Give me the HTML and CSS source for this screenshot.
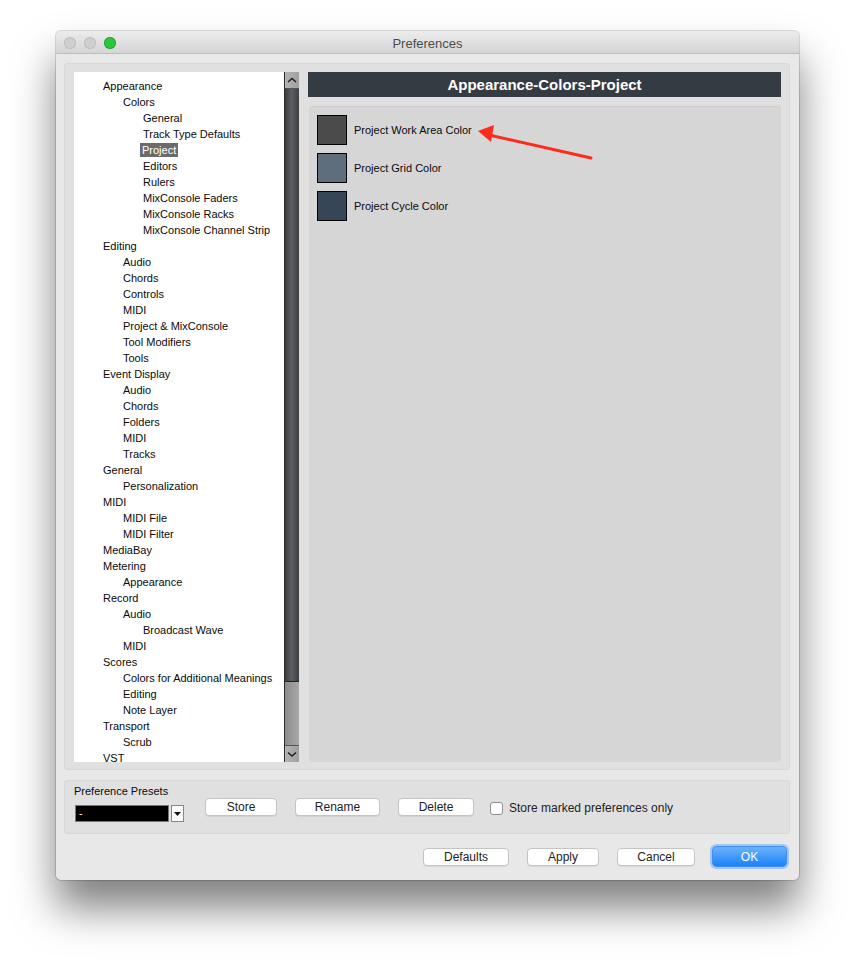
FILE: index.html
```html
<!DOCTYPE html>
<html lang="en">

<head>
    <meta charset="UTF-8">
    <meta name="viewport" content="width=device-width, initial-scale=1.0">
    <title>Preferences</title>
    <link rel="stylesheet" href="styles.css">
</head>

<body>
    <div class="window">
        <!-- Title bar -->
        <div class="titlebar">
            <div class="lights">
                <span class="light"></span>
                <span class="light"></span>
                <span class="light green"></span>
            </div>
            <div class="title">Preferences</div>
        </div>

        <!-- Main area: tree + page -->
        <div class="main">
            <div class="tree">
                <div class="tree-list">
                    <div class="item l1">Appearance</div>
                    <div class="item l2">Colors</div>
                    <div class="item l3">General</div>
                    <div class="item l3">Track Type Defaults</div>
                    <div class="item l3"><span class="selected">Project</span></div>
                    <div class="item l3">Editors</div>
                    <div class="item l3">Rulers</div>
                    <div class="item l3">MixConsole Faders</div>
                    <div class="item l3">MixConsole Racks</div>
                    <div class="item l3">MixConsole Channel Strip</div>
                    <div class="item l1">Editing</div>
                    <div class="item l2">Audio</div>
                    <div class="item l2">Chords</div>
                    <div class="item l2">Controls</div>
                    <div class="item l2">MIDI</div>
                    <div class="item l2">Project &amp; MixConsole</div>
                    <div class="item l2">Tool Modifiers</div>
                    <div class="item l2">Tools</div>
                    <div class="item l1">Event Display</div>
                    <div class="item l2">Audio</div>
                    <div class="item l2">Chords</div>
                    <div class="item l2">Folders</div>
                    <div class="item l2">MIDI</div>
                    <div class="item l2">Tracks</div>
                    <div class="item l1">General</div>
                    <div class="item l2">Personalization</div>
                    <div class="item l1">MIDI</div>
                    <div class="item l2">MIDI File</div>
                    <div class="item l2">MIDI Filter</div>
                    <div class="item l1">MediaBay</div>
                    <div class="item l1">Metering</div>
                    <div class="item l2">Appearance</div>
                    <div class="item l1">Record</div>
                    <div class="item l2">Audio</div>
                    <div class="item l3">Broadcast Wave</div>
                    <div class="item l2">MIDI</div>
                    <div class="item l1">Scores</div>
                    <div class="item l2">Colors for Additional Meanings</div>
                    <div class="item l2">Editing</div>
                    <div class="item l2">Note Layer</div>
                    <div class="item l1">Transport</div>
                    <div class="item l2">Scrub</div>
                    <div class="item l1">VST</div>
                </div>
                <!-- Scrollbar -->
                <div class="scrollbar">
                    <div class="sb-btn">
                        <svg width="12" height="8" viewBox="0 0 12 8"><path d="M2 6 L6 2.5 L10 6" fill="none" stroke="#222" stroke-width="1.6"/></svg>
                    </div>
                    <div class="sb-thumb"></div>
                    <div class="sb-track"></div>
                    <div class="sb-btn">
                        <svg width="12" height="8" viewBox="0 0 12 8"><path d="M2 2.5 L6 6 L10 2.5" fill="none" stroke="#222" stroke-width="1.6"/></svg>
                    </div>
                </div>
            </div>

            <div class="page">
                <div class="page-header">Appearance-Colors-Project</div>
                <div class="page-body">
                    <div class="color-row">
                        <span class="swatch work"></span>
                        <span>Project Work Area Color</span>
                    </div>
                    <div class="color-row">
                        <span class="swatch grid"></span>
                        <span>Project Grid Color</span>
                    </div>
                    <div class="color-row">
                        <span class="swatch cycle"></span>
                        <span>Project Cycle Color</span>
                    </div>
                    <!-- annotation arrow -->
                    <svg class="annotation" width="300" height="70" viewBox="0 0 300 70">
                        <line x1="282" y1="52" x2="180" y2="29" stroke="#fc2b1c" stroke-width="3" stroke-linecap="round"/>
                        <polygon points="169,25 185,19 182,36" fill="#fc2b1c"/>
                    </svg>
                </div>
            </div>
        </div>

        <!-- Presets -->
        <div class="presets">
            <div class="presets-label">Preference Presets</div>
            <div class="presets-row">
                <div class="combo">
                    <div class="combo-field">-</div>
                    <div class="combo-btn">
                        <svg width="7" height="4" viewBox="0 0 7 4"><path d="M0 0 L7 0 L3.5 4 Z" fill="#111"/></svg>
                    </div>
                </div>
                <button class="btn store">Store</button>
                <button class="btn rename">Rename</button>
                <button class="btn delete">Delete</button>
                <label class="check"><span class="box"></span>Store marked preferences only</label>
            </div>
        </div>

        <!-- Dialog buttons -->
        <div class="footer">
            <button class="btn defaults">Defaults</button>
            <button class="btn apply">Apply</button>
            <button class="btn cancel">Cancel</button>
            <button class="btn ok">OK</button>
        </div>
    </div>
</body>

</html>
```

FILE: styles.css
```css
body {
    margin: 0;
    min-height: 960px;
    background: #ffffff;
    font-family: "Liberation Sans", Arial, sans-serif;
    color: #0a0a0a;
    overflow: hidden;
}

.window {
    margin: 31px 0 0 56px;
    width: 743px;
    height: 849px;
    background: #e8e8e8;
    border-radius: 5px;
    box-shadow: 0 0 0 1px rgba(0, 0, 0, 0.14), 0 28px 42px rgba(0, 0, 0, 0.5);
    display: flex;
    flex-direction: column;
}

/* Title bar */
.titlebar {
    height: 22px;
    background: linear-gradient(#ececec, #d5d5d5);
    border-bottom: 1px solid #bcbcbc;
    border-radius: 5px 5px 0 0;
    display: flex;
    align-items: center;
}

.lights {
    display: flex;
    gap: 8px;
    padding-left: 8px;
    padding-top: 1px;
}

.light {
    width: 12px;
    height: 12px;
    border-radius: 50%;
    background: #cfcfcf;
    box-shadow: inset 0 0 0 1px #bdbdbd;
}

.light.green {
    background: #2fc53f;
    box-shadow: inset 0 0 0 1px #25a933;
}

.title {
    flex: 1;
    text-align: center;
    font-size: 13px;
    color: #4c4c4c;
    margin-right: 60px;
    padding-top: 2px;
}

/* Main panel */
.main {
    margin: 9px 9px 0 8px;
    height: 690px;
    padding: 9px 9px 8px 10px;
    background: #e0e0e0;
    border-radius: 4px;
    box-shadow: inset 0 0 0 1px #d8d8d8;
    display: flex;
    gap: 9px;
}

.tree {
    display: flex;
    height: 690px;
}

.tree-list {
    width: 210px;
    background: #ffffff;
    padding-top: 6px;
    overflow: hidden;
    font-size: 11px;
}

.item {
    height: 16px;
    line-height: 16px;
    white-space: nowrap;
}

.l1 { padding-left: 29px; }
.l2 { padding-left: 49px; }
.l3 { padding-left: 69px; }

.selected {
    background: #6b6b6b;
    color: #ffffff;
    padding: 1px 2px;
    margin-left: -3px;
}

.scrollbar {
    width: 14px;
    display: flex;
    flex-direction: column;
    border-left: 1px solid #2a2a2a;
}

.sb-btn {
    height: 16px;
    background: linear-gradient(90deg, #b4b4b4, #a0a0a0);
    display: flex;
    align-items: center;
    justify-content: center;
    border-bottom: 1px solid #555;
}

.sb-btn:last-child {
    border-bottom: none;
    border-top: 1px solid #555;
}

.sb-thumb {
    height: 592px;
    background: linear-gradient(90deg, #3a3d40, #5c5f62 45%, #3e4144);
    border-bottom: 1px solid #222;
}

.sb-track {
    flex: 1;
    background: linear-gradient(90deg, #8c8c8c, #a8a8a8);
}

/* Right page */
.page {
    flex: 1;
    display: flex;
    flex-direction: column;
    gap: 9px;
}

.page-header {
    height: 25px;
    line-height: 25px;
    background: #343b43;
    color: #ffffff;
    font-weight: bold;
    font-size: 15px;
    text-align: center;
}

.page-body {
    flex: 1;
    margin-left: 1px;
    background: #d6d6d6;
    border-radius: 4px;
    box-shadow: inset 0 1px 0 #cdcdcd;
    padding: 9px 8px;
    position: relative;
}

.color-row {
    display: flex;
    align-items: center;
    gap: 7px;
    height: 30px;
    margin-bottom: 8px;
    font-size: 11px;
}

.swatch {
    width: 28px;
    height: 28px;
    border: 1px solid #000;
}

.swatch.work { background: #4b4b4b; }
.swatch.grid { background: #5f6e7c; }
.swatch.cycle { background: #364657; }

.annotation {
    position: absolute;
    left: 0;
    top: 0;
}

/* Presets */
.presets {
    margin: 10px 9px 0 8px;
    height: 54px;
    box-sizing: border-box;
    padding: 5px 10px 0 10px;
    background: #e0e0e0;
    border-radius: 4px;
    box-shadow: inset 0 0 0 1px #d8d8d8;
}

.presets-label {
    font-size: 11px;
    height: 13px;
    line-height: 13px;
}

.presets-row {
    display: flex;
    align-items: flex-start;
    margin-top: 0;
}

.combo {
    display: flex;
    align-items: center;
    gap: 2px;
    margin-left: 1px;
    margin-top: 7px;
}

.combo-field {
    width: 89px;
    height: 15px;
    background: #000;
    border: 1px solid #777;
    color: #fff;
    font-size: 11px;
    line-height: 15px;
    padding-left: 3px;
}

.combo-btn {
    width: 11px;
    height: 15px;
    background: #fafafa;
    border: 1px solid #888;
    display: flex;
    align-items: center;
    justify-content: center;
}

.btn {
    font-family: "Liberation Sans", Arial, sans-serif;
    font-size: 12px;
    color: #222;
    height: 18px;
    padding: 0;
    background: #ffffff;
    border: 1px solid #c4c4c4;
    border-radius: 4px;
    box-shadow: 0 1px 0 rgba(0, 0, 0, 0.06);
}

.store { width: 72px; margin-left: 21px; }
.rename { width: 85px; margin-left: 18px; }
.delete { width: 76px; margin-left: 18px; }

.check {
    display: flex;
    align-items: center;
    height: 18px;
    margin-top: 1px;
    font-size: 12px;
    color: #222;
    margin-left: 16px;
    gap: 6px;
}

.box {
    width: 11px;
    height: 11px;
    background: #fff;
    border: 1px solid #8e8e8e;
    border-radius: 3px;
}

/* Footer buttons */
.footer {
    display: flex;
    justify-content: flex-end;
    align-items: center;
    padding: 12px 12px 0 0;
}

.defaults { width: 86px; margin-right: 18px; }
.apply { width: 72px; margin-right: 18px; }
.cancel { width: 78px; margin-right: 17px; }

.ok {
    width: 75px;
    height: 21px;
    color: #ffffff;
    background: linear-gradient(#6bb3fa, #1b82fb);
    border: 1px solid #3f8ef0;
    box-shadow: 0 0 0 2px #9fc8f8;
    font-size: 12px;
}
```
